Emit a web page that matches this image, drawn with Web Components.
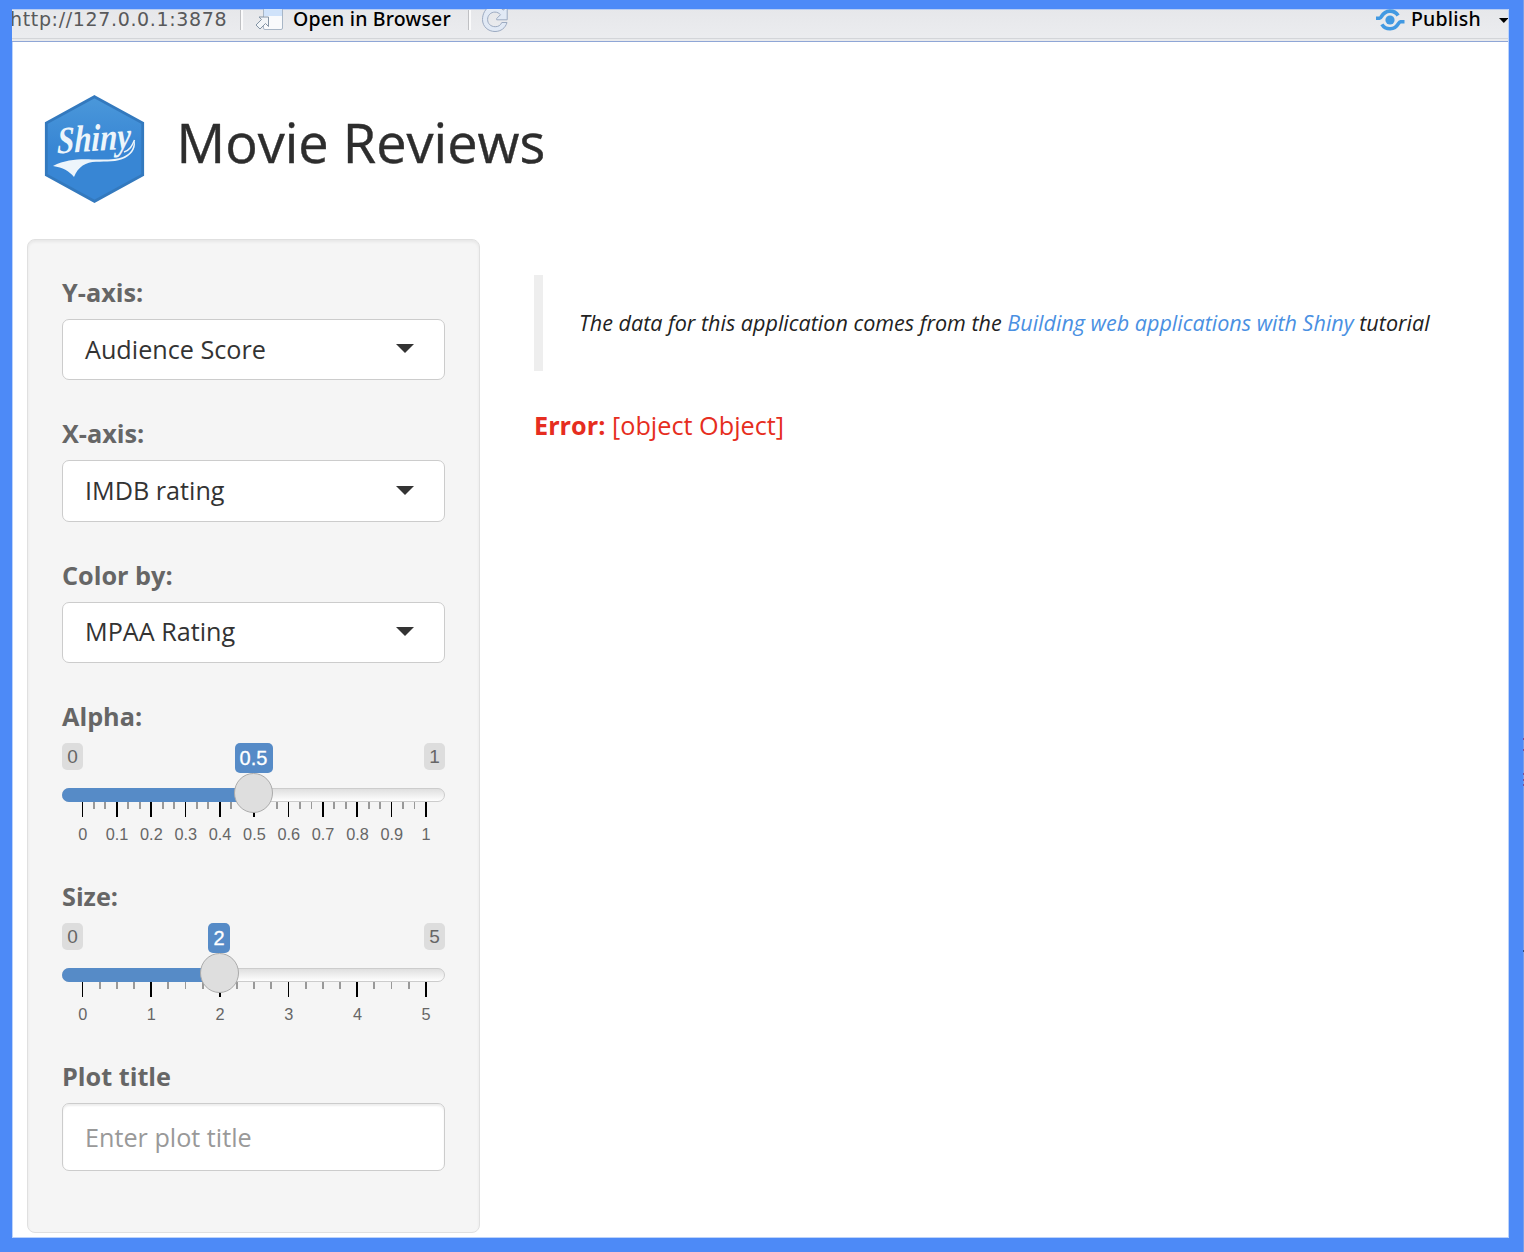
<!DOCTYPE html>
<html lang="en"><head><meta charset="utf-8"><title>Movie Reviews</title>
<style>
body{margin:0;font-family:"Open Sans","Noto Sans",sans-serif;color:#2d2d2d}
</style></head><body>
<app-frame>
  <viewer-toolbar></viewer-toolbar>
  <page-header>Movie Reviews</page-header>
  <page-columns>
    <side-panel slot="side">
      <form-group label="Y-axis:" style="height:141px"><select-box>Audience Score</select-box></form-group>
      <form-group label="X-axis:" style="height:142px"><select-box class="tall">IMDB rating</select-box></form-group>
      <form-group label="Color by:" style="height:141px"><select-box class="raised">MPAA Rating</select-box></form-group>
      <form-group label="Alpha:" style="height:180px"><range-slider kind="alpha"></range-slider></form-group>
      <form-group label="Size:" style="height:180px"><range-slider kind="size"></range-slider></form-group>
      <form-group label="Plot title" style="height:108px"><text-field>Enter plot title</text-field></form-group>
    </side-panel>
    <main-panel slot="main">
      <block-quote>The data for this application comes from the <a>Building web applications with Shiny</a> tutorial</block-quote>
      <error-message label="Error:">[object Object]</error-message>
    </main-panel>
  </page-columns>
</app-frame>
<script>
const define=(name,html)=>customElements.define(name,class extends HTMLElement{
  constructor(){super();this.attachShadow({mode:'open'}).innerHTML=typeof html==='function'?html(this):html;}
});
define('app-frame',`<style>
:host{display:flex;box-sizing:border-box;width:1524px;height:1252px;background:#4d8af7;overflow:hidden;padding:9px 0 14px 12px}
.view{width:1496px;height:1228px;background:#fff;border-right:1px solid #bcd3fb;border-bottom:1px solid #bcd3fb;overflow:hidden;box-shadow:inset 1px 0 #bcd3fb}
.edge{width:1px;height:1252px;margin:-9px 0 0 14px;background:linear-gradient(#7b4f97,#7b4f97) 0 738px/1px 2px no-repeat,linear-gradient(#7b4f97,#7b4f97) 0 749px/1px 2px no-repeat,linear-gradient(#7b4f97,#7b4f97) 0 773px/1px 2px no-repeat,linear-gradient(#7b4f97,#7b4f97) 0 779px/1px 2px no-repeat,linear-gradient(#7b4f97,#7b4f97) 0 784px/1px 2px no-repeat,linear-gradient(#34507f,#34507f) 0 950px/1px 2px no-repeat,#789fe9}
</style><div class="view"><slot></slot></div><div class="edge"></div>`);
define('viewer-toolbar',`<style>
:host{display:flex;box-sizing:border-box;height:33px;background:linear-gradient(#e6e7ea,#ebecef 85%);border-bottom:1px solid #8fa6d6;font:500 19.500px/20px "Noto Sans",sans-serif;color:#000;white-space:nowrap;box-shadow:inset 0 1px #b9cdf2,inset 0 -2px #e9eaec,inset 0 -3px #d3d5d9}
span{display:block;height:20px}
.url{width:228px;color:#58595b;font:400 19px/20px "DejaVu Sans",sans-serif;letter-spacing:.65px;text-indent:-2px}
.sep{width:1px;height:20px;margin-top:1px;background:#bfc0c3;border-right:2px solid #fafafb}
.open{margin-left:8px;letter-spacing:.18px;width:175px}
.pub{margin-left:5px;width:87px;letter-spacing:.2px}
svg{display:block;flex:none}
</style>
<span class="url">http://127.0.0.1:3878</span><i class="sep"></i>
<svg style="margin-left:12px" width="30" height="24" viewBox="255 9 30 24"><rect x="263.500" y="6.500" width="19" height="23" rx="1.500" fill="#f9fafc" stroke="#a8b6c6"/><path d="M264 9h18v7h-18z" fill="#cfe2fa"/><path d="M259 17h9.500v9.500l-3-3-5.500 5.500-4-4 5.500-5.500z" fill="#f2f5f8" stroke="#8494a5" stroke-width="1" stroke-linejoin="round"/></svg>
<span class="open">Open in Browser</span><i class="sep"></i>
<svg style="margin-left:9px" width="30" height="24" viewBox="480 9 30 24"><path d="M503 10.2C495-.3 482.500 7.500 482.500 19.500c0 7 5.600 12 12.500 12 6 0 10.400-3.500 12-9h-5.200c-1.400 3-3.500 4.200-6.500 4.200-4.700 0-7.700-3.100-7.700-7.300s3.300-7.300 7.300-7.300c2.300 0 4.200 1 5.600 2.600l-3.800 3.800v1.300h10.500V7z" fill="#e1e9f5" stroke="#9caac1" stroke-width="1"/></svg>
<svg style="margin-left:auto" width="30" height="24" viewBox="1376 9 30 24"><g fill="none" stroke="#4299e2" stroke-width="3.600"><path d="M1375.500 18.200h4.200c2.200 0 2.100-6.800 10-7.100 4.100-.1 6.800 1.700 8.400 4.400"/><path d="M1404.500 21.700h-4.200c-2.200 0-2.100 6.800-10 7.100-4.100.1-6.800-1.700-8.400-4.400"/></g><circle cx="1390" cy="20" r="4.600" fill="#4299e2"/></svg>
<span class="pub">Publish</span><svg width="10" height="24" viewBox="1498 9 10 24"><path d="M1499 18h9.500l-4.700 5z"/></svg>`);
define('page-header',`<style>
:host{display:flex;height:197px;box-sizing:border-box;padding:51px 0 0 31px}
svg{display:block}h1{margin:0;font-weight:400;font-size:54.100px;line-height:76px;padding:11px 0 0 29.500px;white-space:nowrap;-webkit-text-stroke:.4px #2d2d2d}
</style><svg width="104" height="112" viewBox="43 93 104 112">
<defs><linearGradient id="g" x2="0" y2="1"><stop stop-color="#4b98da"/><stop offset=".5" stop-color="#3886d4"/></linearGradient></defs>
<path d="M94.500 96.700l48.200 26.300v52L94.500 201.300l-48.200-26.300v-52z" fill="url(#g)" stroke="#3379be" stroke-width="2.800"/>
<text x="0" y="0" transform="translate(57 153.500) rotate(-4) skewX(-5)" font-family="Liberation Serif,serif" font-style="italic" font-weight="700" font-size="38" textLength="74" lengthAdjust="spacingAndGlyphs" fill="#edf5fb">Shiny</text>
<path d="M124 152c6-2 8-6 10.500-12" fill="none" stroke="#edf5fb" stroke-width="1.500"/>
<path d="M53 166c13-6.500 26-7 39-6.500 14 .2 24 .5 31-2.500 8-3.500 11-9 11-17 3 6-1 14-9 18-8 4-19 3.500-29 3.700-10 .2-18 5-22 15.300-5-6-11-9.500-21-11z" fill="#edf5fb"/></svg><h1><slot></slot></h1>`);
define('page-columns',`<style>:host{display:flex;padding-left:15px;gap:54px}</style><slot name="side"></slot><slot name="main"></slot>`);
define('side-panel',`<style>:host{display:flex;flex-direction:column;box-sizing:border-box;width:453px;height:994px;padding:39px 34px;border:1px solid #e0e0e0;border-radius:8px;background:#f5f5f5;box-shadow:inset 0 2px 3px rgba(0,0,0,.06)}</style><slot></slot>`);
define('form-group',e=>`<style>:host{display:flex;flex-direction:column;flex:none}label{height:40px;line-height:26px;font-size:25.250px;font-weight:700;color:#666;white-space:nowrap}</style><label>${e.getAttribute('label')}</label><slot></slot>`);
define('select-box',`<style>:host{display:flex;box-sizing:border-box;align-items:center;justify-content:space-between;width:383px;height:61px;padding:0 30px 2px 22px;border:1px solid #ccc;border-radius:7px;background:#fff;font-size:25.200px;color:#333;white-space:nowrap}svg{display:block;margin-top:-1px}:host(.tall){height:62px}:host(.tall) svg{margin-top:1px}:host(.raised){padding-bottom:4px}:host(.raised) svg{margin-top:1px}</style><slot></slot><svg width="18" height="9"><path d="M0 0h18L9 9z" fill="#333"/></svg>`);
define('text-field',`<style>:host{display:flex;box-sizing:border-box;align-items:center;width:383px;height:68px;padding:0 22px;border:1px solid #ccc;border-radius:7px;background:#fff;box-shadow:inset 0 2px 2px rgba(0,0,0,.07);font-size:25.200px;color:#999}</style><slot></slot>`);
const sliders={
 alpha:{max:'1',val:'0.5',pos:191.5,w:38,cx:191.500,labels:['0','0.1','0.2','0.3','0.4','0.5','0.6','0.7','0.8','0.9','1'],
  major:[82,116,150,185,219,253,288,322,356,391,425],minor:[93,104,127,139,162,173,196,207,230,276,299,311,333,345,368,379,402,414]},
 size:{max:'5',val:'2',pos:157,w:22,cx:157.500,labels:['0','1','2','3','4','5'],
  major:[82,150,219,288,356,425],minor:[99,116,133,167,185,202,236,253,270,305,322,339,373,391,408]}};
const thin=[82,185,288,311,391,414];
define('range-slider',e=>{const s=sliders[e.getAttribute('kind')];
 const tick=(h,c)=>x=>`<rect x="${x-62}" y="14" width="${thin.includes(x)?1:2}" height="${h}" fill="${c}"/>`;
 return `<style>
:host{display:flex;flex-direction:column;width:383px;height:105px;font-family:"Liberation Sans",Arial,sans-serif;color:#666}
.top{display:flex;height:30px;align-items:flex-start}
.lim{width:21px;height:27px;border-radius:5px;background:#ddd;font-size:19px;line-height:28px;text-align:center}
.val{width:${s.w}px;height:30px;border-radius:5px;background:#568bc7;color:#fff;font-size:20px;line-height:31px;text-align:center;margin-left:${s.pos-s.w/2-21}px;-webkit-text-stroke:.3px #fff}
.max{margin-left:auto}
svg{display:block}
.labels{display:flex;justify-content:space-between;width:343.500px;margin:7px 0 0 20.700px;font-size:16.300px;line-height:20px}
.labels span{display:flex;width:0;justify-content:center}
</style><div class="top"><span class="lim">0</span><span class="val">${s.val}</span><span class="lim max">${s.max}</span></div>
<svg width="383" height="44" viewBox="0 -15 383 44"><defs><linearGradient id="t" x2="0" y2="1"><stop stop-color="#dedede"/><stop offset="1" stop-color="#fff"/></linearGradient></defs>
${s.minor.map(tick(7,'#999')).join('')}${s.major.map(tick(15,'#000')).join('')}
<rect x=".5" y=".5" width="382" height="13" rx="6.500" fill="url(#t)" stroke="#ccc"/>
<path d="M${s.cx} 0H7a7 7 0 0 0 0 14H${s.cx}z" fill="#568bc7"/>
<ellipse cx="${s.cx}" cy="5" rx="19" ry="19.500" fill="#dedede" stroke="#ababab"/></svg>
<div class="labels">${s.labels.map(l=>`<span>${l}</span>`).join('')}</div>`});
define('main-panel',`<style>:host{display:flex;flex-direction:column;align-items:flex-start;padding-top:36px}</style><slot></slot>`);
define('block-quote',`<style>:host{display:block;box-sizing:border-box;height:96px;border-left:9px solid #eee;padding:0 0 0 36px;font-size:21.550px;line-height:95px;font-style:italic;white-space:nowrap;color:#222}::slotted(a){color:#4a90e2}</style><slot></slot>`);
define('error-message',e=>`<style>:host{display:block;margin-top:36px;font-size:25.250px;line-height:36px;color:#e62d20;white-space:nowrap}</style><b>${e.getAttribute('label')}</b> <slot></slot>`);
</script></body></html>
